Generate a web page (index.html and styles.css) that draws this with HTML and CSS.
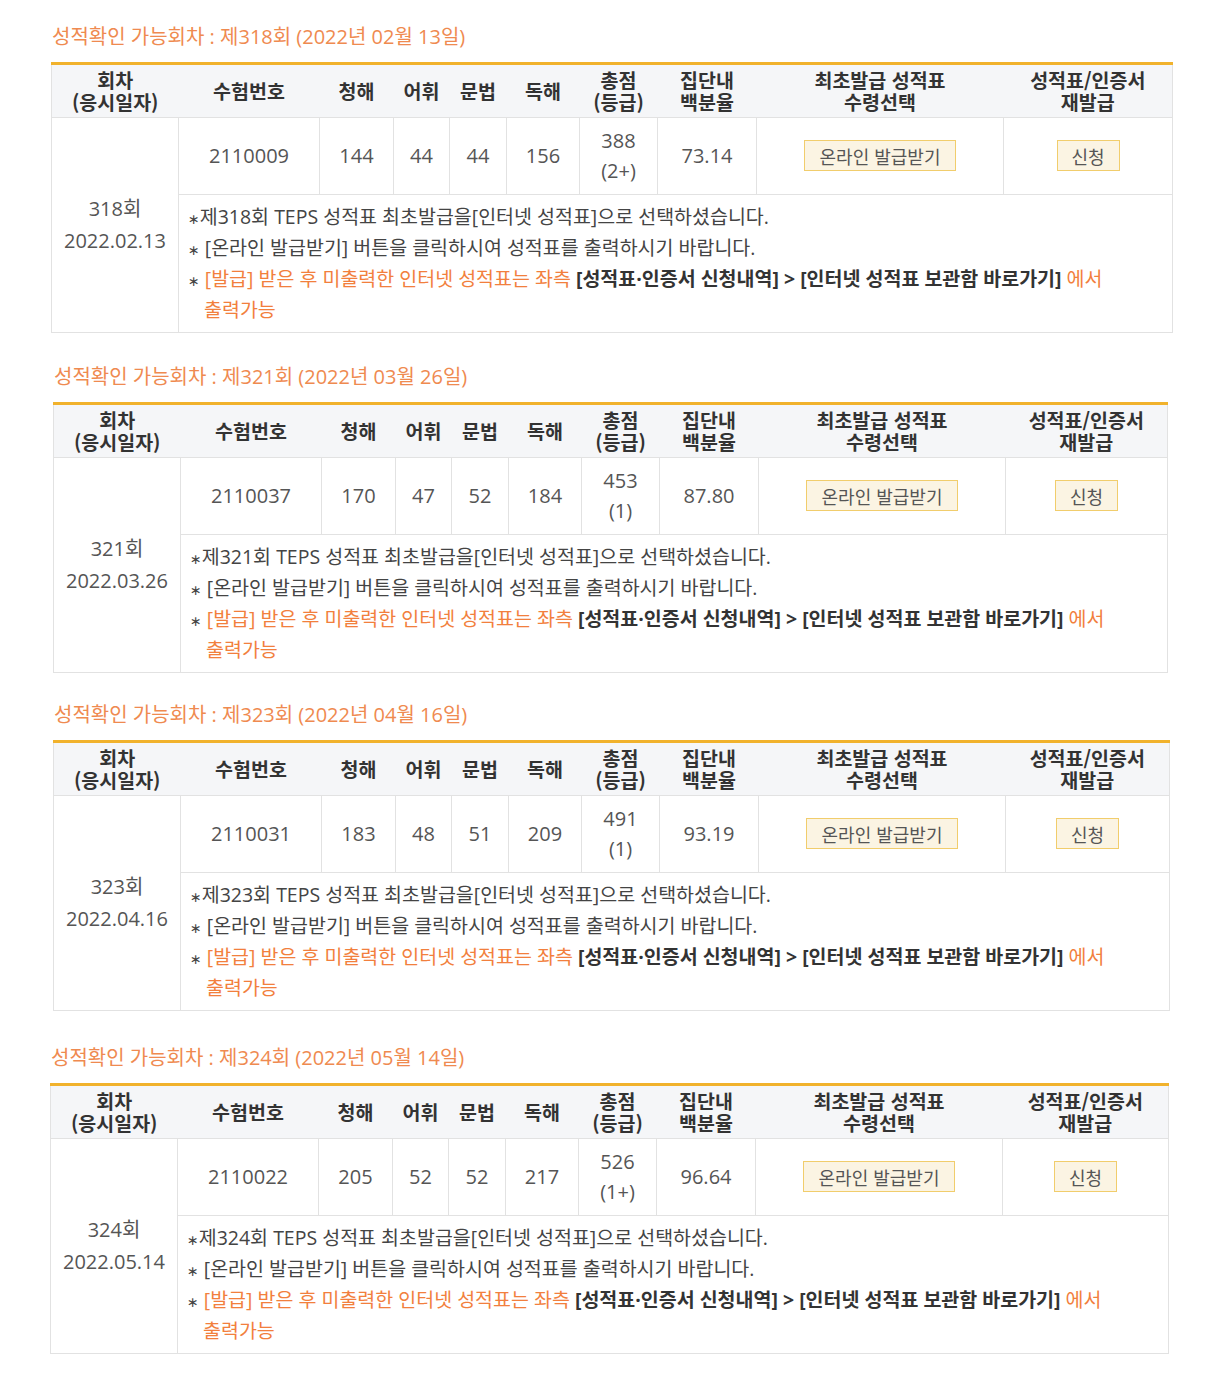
FILE: index.html
```html
<!DOCTYPE html>
<html lang="ko">
<head>
<meta charset="utf-8">
<title>성적확인</title>
<link rel="stylesheet" href="styles.css">
</head>
<body>
<div class="page">

<section class="round r1">
  <h2 class="round-title">성적확인 가능회차 : 제318회 (2022년 02월 13일)</h2>
  <table class="score">
    <colgroup>
      <col class="c-date"><col class="c-no"><col class="c-l"><col class="c-v"><col class="c-g"><col class="c-r"><col class="c-t"><col class="c-p"><col class="c-sel"><col class="c-re">
    </colgroup>
    <thead>
      <tr><th>회차<br>(응시일자)</th><th>수험번호</th><th>청해</th><th>어휘</th><th>문법</th><th>독해</th><th>총점<br>(등급)</th><th>집단내<br>백분율</th><th>최초발급 성적표<br>수령선택</th><th>성적표/인증서<br>재발급</th></tr>
    </thead>
    <tbody>
      <tr class="data-row">
        <td rowspan="2" class="date">318회<br>2022.02.13</td>
        <td>2110009</td><td>144</td><td>44</td><td>44</td><td>156</td><td>388<br>(2+)</td><td>73.14</td>
        <td><button class="btn btn-wide">온라인 발급받기</button></td>
        <td><button class="btn btn-small">신청</button></td>
      </tr>
      <tr>
        <td colspan="9" class="notes">
          <p><span class="mark">∗</span>제318회 TEPS 성적표 최초발급을[인터넷 성적표]으로 선택하셨습니다.</p>
          <p class="hang"><span class="mark">∗</span> [온라인 발급받기] 버튼을 클릭하시여 성적표를 출력하시기 바랍니다.</p>
          <p class="hang warn"><span class="mark">∗</span> [발급] 받은 후 미출력한 인터넷 성적표는 좌측 <strong>[성적표·인증서 신청내역] &gt; [인터넷 성적표 보관함 바로가기]</strong> 에서 출력가능</p>
        </td>
      </tr>
    </tbody>
  </table>
</section>

<section class="round r2">
  <h2 class="round-title">성적확인 가능회차 : 제321회 (2022년 03월 26일)</h2>
  <table class="score">
    <colgroup>
      <col class="c-date"><col class="c-no"><col class="c-l"><col class="c-v"><col class="c-g"><col class="c-r"><col class="c-t"><col class="c-p"><col class="c-sel"><col class="c-re">
    </colgroup>
    <thead>
      <tr><th>회차<br>(응시일자)</th><th>수험번호</th><th>청해</th><th>어휘</th><th>문법</th><th>독해</th><th>총점<br>(등급)</th><th>집단내<br>백분율</th><th>최초발급 성적표<br>수령선택</th><th>성적표/인증서<br>재발급</th></tr>
    </thead>
    <tbody>
      <tr class="data-row">
        <td rowspan="2" class="date">321회<br>2022.03.26</td>
        <td>2110037</td><td>170</td><td>47</td><td>52</td><td>184</td><td>453<br>(1)</td><td>87.80</td>
        <td><button class="btn btn-wide">온라인 발급받기</button></td>
        <td><button class="btn btn-small">신청</button></td>
      </tr>
      <tr>
        <td colspan="9" class="notes">
          <p><span class="mark">∗</span>제321회 TEPS 성적표 최초발급을[인터넷 성적표]으로 선택하셨습니다.</p>
          <p class="hang"><span class="mark">∗</span> [온라인 발급받기] 버튼을 클릭하시여 성적표를 출력하시기 바랍니다.</p>
          <p class="hang warn"><span class="mark">∗</span> [발급] 받은 후 미출력한 인터넷 성적표는 좌측 <strong>[성적표·인증서 신청내역] &gt; [인터넷 성적표 보관함 바로가기]</strong> 에서 출력가능</p>
        </td>
      </tr>
    </tbody>
  </table>
</section>

<section class="round r3">
  <h2 class="round-title">성적확인 가능회차 : 제323회 (2022년 04월 16일)</h2>
  <table class="score">
    <colgroup>
      <col class="c-date"><col class="c-no"><col class="c-l"><col class="c-v"><col class="c-g"><col class="c-r"><col class="c-t"><col class="c-p"><col class="c-sel"><col class="c-re">
    </colgroup>
    <thead>
      <tr><th>회차<br>(응시일자)</th><th>수험번호</th><th>청해</th><th>어휘</th><th>문법</th><th>독해</th><th>총점<br>(등급)</th><th>집단내<br>백분율</th><th>최초발급 성적표<br>수령선택</th><th>성적표/인증서<br>재발급</th></tr>
    </thead>
    <tbody>
      <tr class="data-row">
        <td rowspan="2" class="date">323회<br>2022.04.16</td>
        <td>2110031</td><td>183</td><td>48</td><td>51</td><td>209</td><td>491<br>(1)</td><td>93.19</td>
        <td><button class="btn btn-wide">온라인 발급받기</button></td>
        <td><button class="btn btn-small">신청</button></td>
      </tr>
      <tr>
        <td colspan="9" class="notes">
          <p><span class="mark">∗</span>제323회 TEPS 성적표 최초발급을[인터넷 성적표]으로 선택하셨습니다.</p>
          <p class="hang"><span class="mark">∗</span> [온라인 발급받기] 버튼을 클릭하시여 성적표를 출력하시기 바랍니다.</p>
          <p class="hang warn"><span class="mark">∗</span> [발급] 받은 후 미출력한 인터넷 성적표는 좌측 <strong>[성적표·인증서 신청내역] &gt; [인터넷 성적표 보관함 바로가기]</strong> 에서 출력가능</p>
        </td>
      </tr>
    </tbody>
  </table>
</section>

<section class="round r4">
  <h2 class="round-title">성적확인 가능회차 : 제324회 (2022년 05월 14일)</h2>
  <table class="score">
    <colgroup>
      <col class="c-date"><col class="c-no"><col class="c-l"><col class="c-v"><col class="c-g"><col class="c-r"><col class="c-t"><col class="c-p"><col class="c-sel"><col class="c-re">
    </colgroup>
    <thead>
      <tr><th>회차<br>(응시일자)</th><th>수험번호</th><th>청해</th><th>어휘</th><th>문법</th><th>독해</th><th>총점<br>(등급)</th><th>집단내<br>백분율</th><th>최초발급 성적표<br>수령선택</th><th>성적표/인증서<br>재발급</th></tr>
    </thead>
    <tbody>
      <tr class="data-row">
        <td rowspan="2" class="date">324회<br>2022.05.14</td>
        <td>2110022</td><td>205</td><td>52</td><td>52</td><td>217</td><td>526<br>(1+)</td><td>96.64</td>
        <td><button class="btn btn-wide">온라인 발급받기</button></td>
        <td><button class="btn btn-small">신청</button></td>
      </tr>
      <tr>
        <td colspan="9" class="notes">
          <p><span class="mark">∗</span>제324회 TEPS 성적표 최초발급을[인터넷 성적표]으로 선택하셨습니다.</p>
          <p class="hang"><span class="mark">∗</span> [온라인 발급받기] 버튼을 클릭하시여 성적표를 출력하시기 바랍니다.</p>
          <p class="hang warn"><span class="mark">∗</span> [발급] 받은 후 미출력한 인터넷 성적표는 좌측 <strong>[성적표·인증서 신청내역] &gt; [인터넷 성적표 보관함 바로가기]</strong> 에서 출력가능</p>
        </td>
      </tr>
    </tbody>
  </table>
</section>

</div>
</body>
</html>
```
FILE: styles.css
```css
* { box-sizing: border-box; }

html, body {
  margin: 0;
  padding: 0;
  background: #ffffff;
}

body {
  font-family: "Open Sans", "Noto Sans CJK KR", sans-serif;
  color: #444;
}

.page {
  padding-top: 24px;
  padding-bottom: 30px;
}

.round {
  margin-bottom: 31px;
}

.r1 { margin-left: 51px; width: 1122px; }
.r2 { margin-left: 53px; width: 1115px; margin-bottom: 29px; }
.r3 { margin-left: 53px; width: 1117px; }
.r4 { margin-left: 50px; width: 1119px; margin-top: 34px; }

.round-title {
  margin: 0 0 12px 1px;
  font-size: 20px;
  line-height: 26px;
  font-weight: 400;
  color: #ef8a50;
}

.score {
  width: 100%;
  table-layout: fixed;
  border-collapse: collapse;
  border-top: 3px solid #f1b22c;
  border-left: 1px solid #e2e2e2;
  border-right: 1px solid #e2e2e2;
  border-bottom: 1px solid #e2e2e2;
}

.c-date { width: 127px; }
.c-no { width: 141px; }
.c-l { width: 74px; }
.c-v { width: 56px; }
.c-g { width: 57px; }
.c-r { width: 73px; }
.c-t { width: 78px; }
.c-p { width: 99px; }
.c-sel { width: 247px; }
.c-re { width: auto; }

.score th {
  height: 54px;
  padding: 0;
  background: #f5f6f8;
  border-bottom: 1px solid #e2e2e2;
  font-family: "Noto Sans CJK KR", sans-serif;
  font-size: 19.5px;
  line-height: 22px;
  font-weight: 700;
  color: #333;
  text-align: center;
  vertical-align: middle;
}

.score td {
  padding: 0;
  text-align: center;
  vertical-align: middle;
  border-left: 1px solid #e2e2e2;
  border-bottom: 1px solid #e2e2e2;
  font-size: 20px;
  line-height: 30px;
  color: #555;
  font-weight: 400;
}

.data-row td {
  height: 77px;
}

.score td.date {
  border-left: none;
  line-height: 32px;
  color: #555;
}

.btn {
  display: inline-block;
  height: 31px;
  padding: 0;
  background: #fbf4e3;
  border: 1px solid #f1cd6c;
  border-radius: 0;
  font-family: "Noto Sans CJK KR", sans-serif;
  font-size: 18px;
  line-height: 28px;
  color: #555;
  font-weight: 400;
  cursor: pointer;
}

.btn-wide { width: 152px; }
.btn-small { width: 63px; }

.score td.notes {
  height: 137px;
  padding: 6px 10px 7px 9px;
  text-align: left;
  vertical-align: top;
  font-size: 19.5px;
  line-height: 31px;
  color: #444;
  word-break: keep-all;
}

.notes p {
  margin: 0;
}

.notes .mark {
  font-family: "DejaVu Sans", sans-serif;
  font-size: 14px;
  line-height: 1;
  color: #444;
}

.notes .hang {
  padding-left: 16px;
  text-indent: -16px;
}

.notes .warn {
  color: #f27f3d;
}

.notes strong {
  color: #333;
  font-weight: 700;
}
```
